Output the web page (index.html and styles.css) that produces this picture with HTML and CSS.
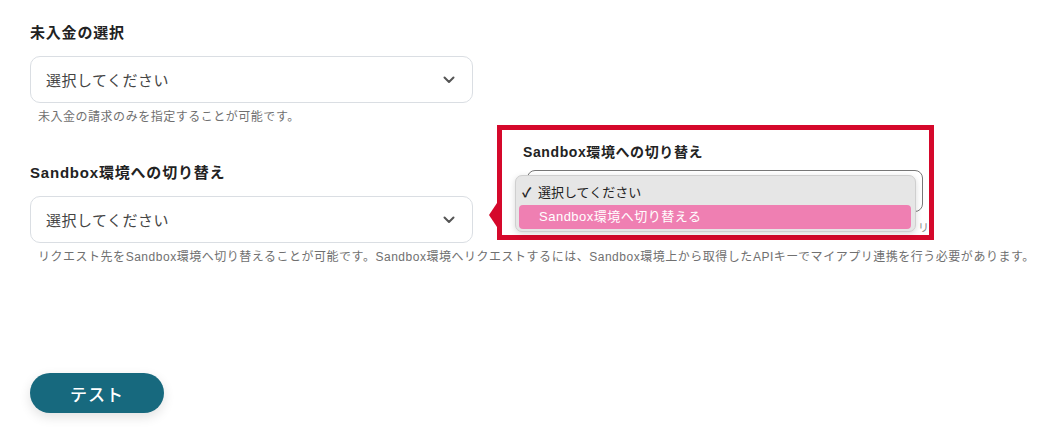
FILE: index.html
```html
<!DOCTYPE html>
<html lang="ja">
<head>
<meta charset="utf-8">
<link rel="stylesheet" href="styles.css">
</head>
<body>
<div class="page">
  <div class="form">
    <div class="field">
      <div class="label">未入金の選択</div>
      <div class="select">
        <span>選択してください</span>
        <svg class="chev" width="12" height="8" viewBox="0 0 12 8"><path d="M1.5 1.5 L6 6 L10.5 1.5" fill="none" stroke="#555" stroke-width="2" stroke-linecap="round" stroke-linejoin="round"/></svg>
      </div>
      <div class="hint">未入金の請求のみを指定することが可能です。</div>
    </div>
    <div class="field">
      <div class="label">Sandbox環境への切り替え</div>
      <div class="select">
        <span>選択してください</span>
        <svg class="chev" width="12" height="8" viewBox="0 0 12 8"><path d="M1.5 1.5 L6 6 L10.5 1.5" fill="none" stroke="#555" stroke-width="2" stroke-linecap="round" stroke-linejoin="round"/></svg>
      </div>
      <div class="hint">リクエスト先をSandbox環境へ切り替えることが可能です。Sandbox環境へリクエストするには、Sandbox環境上から取得したAPIキーでマイアプリ連携を行う必要があります。</div>
    </div>
    <button class="test-btn">テスト</button>
  </div>

  <div class="callout">
    <div class="callout-label">Sandbox環境への切り替え</div>
    <div class="callout-select"></div>
    <div class="callout-hint">リ</div>
    <div class="menu">
      <div class="menu-item"><span class="check">✓</span>選択してください</div>
      <div class="menu-item active">Sandbox環境へ切り替える</div>
    </div>
  </div>
</div>
</body>
</html>
```

FILE: styles.css
```css
* { box-sizing: border-box; }
html, body { margin: 0; padding: 0; background: #fff; }
body {
  font-family: "Liberation Sans", "Noto Sans CJK JP", sans-serif;
  color: #222;
  width: 1043px;
  height: 433px;
  overflow: hidden;
}
.page { position: relative; width: 1043px; height: 433px; }
.form {
  padding: 22px 0 0 30px;
  display: flex;
  flex-direction: column;
  align-items: flex-start;
}
.field { display: flex; flex-direction: column; align-items: flex-start; margin-bottom: 37px; }
.field:last-of-type { margin-bottom: 0; }
.label {
  font-size: 15px;
  font-weight: 700;
  line-height: 22px;
  color: #222;
  margin-bottom: 12px;
  letter-spacing: 0.8px;
}
.select {
  width: 443px;
  height: 47px;
  border: 1px solid #dadee3;
  border-radius: 10px;
  display: flex;
  align-items: center;
  justify-content: space-between;
  padding: 0 17px 0 15px;
  font-size: 15px;
  color: #444;
  letter-spacing: 0.5px;
}
.chev { display: block; }
.hint {
  margin: 6px 0 0 8px;
  font-size: 12px;
  line-height: 16px;
  color: #707070;
  white-space: nowrap;
  letter-spacing: 0.52px;
}
.test-btn {
  margin-top: 108px;
  width: 134px;
  height: 40px;
  border: none;
  border-radius: 20px;
  background: #17697e;
  color: #fff;
  font-family: "Liberation Sans", "Noto Sans CJK JP", sans-serif;
  font-size: 17px;
  font-weight: 500;
  letter-spacing: 1px;
  box-shadow: 0 4px 12px rgba(0, 0, 0, 0.12);
}

/* callout */
.callout {
  position: absolute;
  left: 497px;
  top: 125px;
  width: 437px;
  height: 115px;
  border: 5px solid #d5082b;
  background: #fff;
  padding: 12px 0 0 21px;
}
.callout::before {
  content: "";
  position: absolute;
  left: -13px;
  top: 73px;
  border-style: solid;
  border-width: 12px 8px 12px 0;
  border-color: transparent #d5082b transparent transparent;
}
.callout-label {
  font-size: 14px;
  font-weight: 700;
  line-height: 20px;
  color: #222;
  letter-spacing: 0.6px;
}
.callout-select {
  margin: 8px 0 0 4px;
  width: 396px;
  height: 42px;
  border: 1px solid #777;
  border-radius: 8px;
}
.callout-hint {
  position: absolute;
  left: 416px;
  top: 91px;
  font-size: 11px;
  line-height: 14px;
  color: #888;
}
.menu {
  position: absolute;
  left: 13px;
  top: 45px;
  width: 401px;
  height: 57px;
  background: #e6e6e6;
  border: 1px solid #cfcfcf;
  border-radius: 7px;
  box-shadow: 0 2px 6px rgba(0, 0, 0, 0.15);
  padding: 5px 4px 0 3px;
}
.menu-item {
  height: 23px;
  line-height: 23px;
  font-size: 13px;
  color: #222;
  padding-left: 19px;
  position: relative;
}
.menu-item .check {
  position: absolute;
  left: 3px;
  top: 0;
  font-size: 13px;
  font-weight: 700;
}
.menu-item.active {
  margin-top: 1px;
  height: 24px;
  line-height: 24px;
  background: #ef7fb2;
  color: #fff;
  border-radius: 4px;
  font-size: 13px;
  letter-spacing: 0.5px;
  padding-left: 20px;
}
```
